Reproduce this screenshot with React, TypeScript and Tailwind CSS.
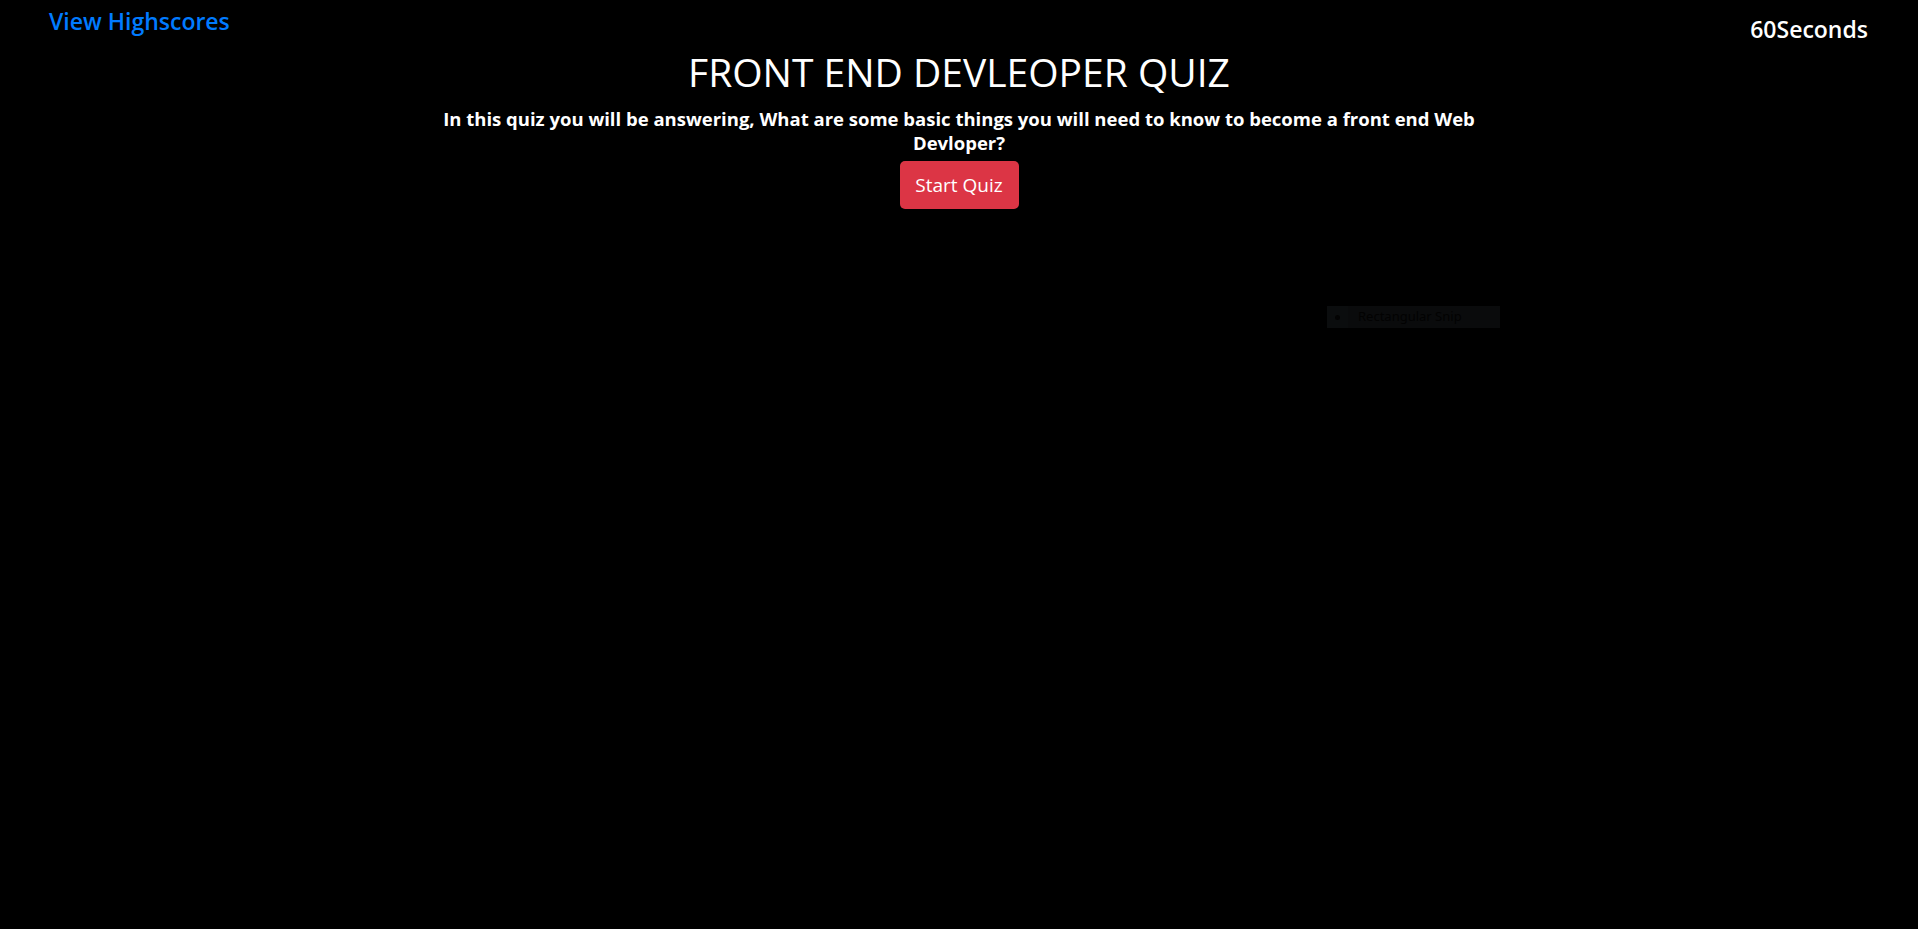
import { useState } from "react";

export default function App() {
  const [seconds] = useState(60);

  return (
    <div className="relative min-h-screen w-full bg-black font-['Open_Sans','Noto_Sans',sans-serif] text-white">
      {/* top bar: highscores link + timer */}
      <header className="flex items-start justify-between pl-[49px] pr-[50px]">
        <a href="#" className="mt-[8px] text-[23px] font-semibold leading-[1.2] text-[#007bff] hover:underline">
          View Highscores
        </a>
        <div className="mt-[16px] text-[23px] font-semibold leading-[1.2] text-white">
          {seconds}Seconds
        </div>
      </header>

      <main className="flex flex-col items-center text-center">
        <h1 className="mt-[5px] text-[39px] font-normal leading-[1.2]">FRONT END DEVLEOPER QUIZ</h1>
        <h5 className="mt-[12px] text-[18.5px] font-bold leading-[24px]">
          In this quiz you will be answering, What are some basic things you will need to know to become a front end Web
          <br />
          Devloper?
        </h5>
        <button
          type="button"
          className="mt-[6px] h-[48px] w-[119px] rounded-[5px] bg-[#dc3545] text-[19px] leading-[1.5] text-white hover:bg-[#c82333]"
        >
          Start Quiz
        </button>
      </main>

      {/* leftover snipping-tool overlay, barely visible */}
      <div className="absolute left-[1327px] top-[306px] flex h-[22px] w-[173px] items-center bg-[#0a0b0c]">
        <div className="flex h-full w-[21px] items-center justify-center bg-[#0b0d0e]">
          <span className="h-[5px] w-[5px] rounded-full bg-[#030303]" />
        </div>
        <span className="ml-[10px] font-['Noto_Sans',sans-serif] text-[13px] text-[#020202]">Rectangular Snip</span>
      </div>
    </div>
  );
}
